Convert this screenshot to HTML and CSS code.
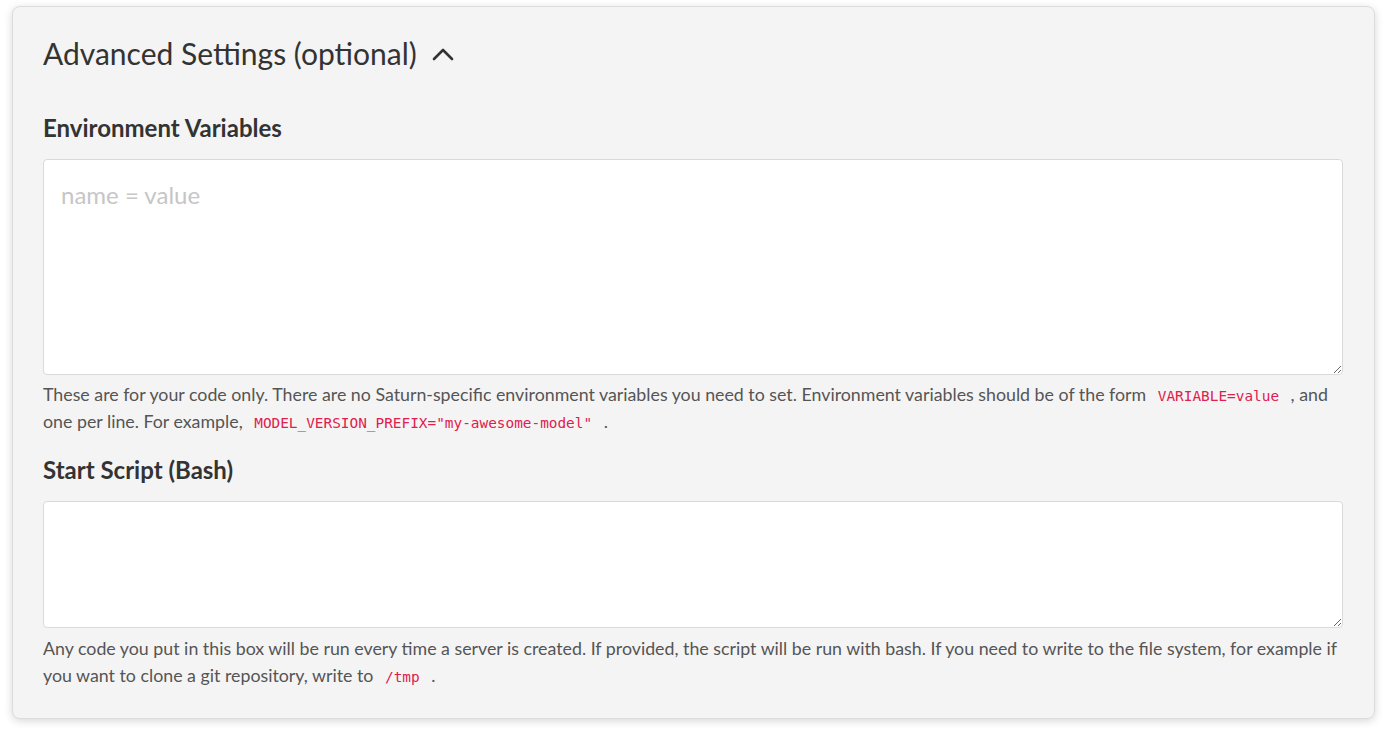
FILE: index.html
```html
<!DOCTYPE html>
<html>
<head>
<meta charset="utf-8">
<link rel="stylesheet" href="styles.css">
</head>
<body>
<section class="card">
  <h2 class="card-title">Advanced Settings (optional)
    <svg class="chevron" width="22" height="14" viewBox="0 0 22 14"><path d="M2 12 L11 3 L20 12" fill="none" stroke="#333" stroke-width="2.6" stroke-linecap="round" stroke-linejoin="round"/></svg>
  </h2>
  <div class="field">
    <h3 class="field-label">Environment Variables</h3>
    <textarea class="field-input env" placeholder="name = value"></textarea>
    <p class="help">These are for your code only. There are no Saturn-specific environment variables you need to set. Environment variables should be of the form <code>VARIABLE=value</code> , and one per line. For example, <code>MODEL_VERSION_PREFIX="my-awesome-model"</code> .</p>
  </div>
  <div class="field">
    <h3 class="field-label">Start Script (Bash)</h3>
    <textarea class="field-input script"></textarea>
    <p class="help help-last">Any code you put in this box will be run every time a server is created. If provided, the script will be run with bash. If you need to write to the file system, for example if you want to clone a git repository, write to <code>/tmp</code> .</p>
  </div>
</section>
</body>
</html>
```
FILE: styles.css
```css
html, body {
  margin: 0;
  padding: 0;
  background: #ffffff;
}
body {
  padding: 6px 18px 20px 12px;
  font-family: Lato, "Open Sans", sans-serif;
  color: #333;
}
.card {
  background: #f4f4f4;
  border: 1px solid #dcdcdc;
  border-radius: 8px;
  box-shadow: 0 2px 8px rgba(0, 0, 0, 0.16);
  padding: 29px 31px 29px 30px;
}
.card-title {
  margin: 0;
  font-size: 30px;
  line-height: 34px;
  font-weight: 400;
  color: #333;
  display: flex;
  align-items: center;
}
.chevron {
  margin-left: 15px;
  margin-top: 2px;
}
.field-label {
  margin: 45px 0 18px;
  font-size: 24px;
  line-height: 26px;
  font-weight: 700;
  color: #333;
}
.field + .field .field-label {
  margin-top: 22px;
}
.field-input {
  display: block;
  box-sizing: border-box;
  width: 100%;
  margin: 0;
  background: #fff;
  border: 1px solid #dadada;
  border-radius: 4px;
  padding: 20px 17px;
  font-family: Lato, sans-serif;
  font-size: 24px;
  color: #333;
  outline: none;
}
.field-input::placeholder {
  color: #c6c6c6;
}
.env {
  height: 216px;
}
.script {
  height: 127px;
}
.help {
  margin: 6px 0 0;
  font-size: 17.8px;
  line-height: 27px;
  color: #555;
}
.help-last {
  margin-top: 7px;
}
code {
  font-family: "DejaVu Sans Mono", "Liberation Mono", monospace;
  font-size: 14.4px;
  line-height: 1;
  color: #e0204d;
  padding: 0 7px;
}
```
